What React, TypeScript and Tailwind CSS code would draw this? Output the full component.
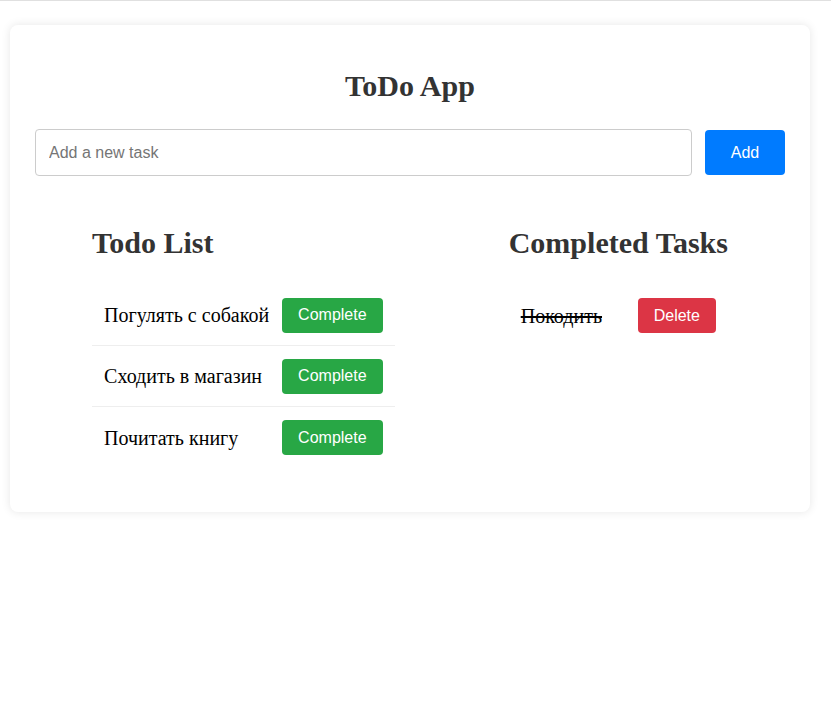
import React from "react";

const serif = { fontFamily: '"Liberation Serif", "Times New Roman", serif' };
const sans = { fontFamily: '"Liberation Sans", Arial, sans-serif' };

export default function App() {
  const todos = ["Погулять с собакой", "Сходить в магазин", "Почитать книгу"];
  const done = ["Покодить"];
  return (
    <div className="min-h-[706px] bg-white border-t border-[#e0e0e0]" style={serif}>
      <div className="ml-[10px] mt-[24px] w-[800px] rounded-[8px] bg-white px-[25px] pt-[44px] pb-[44px] shadow-[0_0_10px_rgba(0,0,0,0.1)]">
        <h1 className="text-center text-[30px] font-bold leading-[34px] text-[#333]">ToDo App</h1>
        <div className="mt-[26px] flex items-center gap-[13px]">
          <input
            className="h-[47px] flex-1 rounded-[4px] border border-[#ccc] px-[13px] text-[16px] text-black placeholder:text-[#757575] outline-none"
            style={sans}
            placeholder="Add a new task"
          />
          <button className="h-[45px] w-[80px] rounded-[4px] bg-[#007bff] text-[16px] text-white" style={sans}>
            Add
          </button>
        </div>
        <div className="mt-[50px] flex justify-around">
          <div>
            <h2 className="text-[30px] font-bold leading-[34px] text-[#333]">Todo List</h2>
            <ul className="mt-[25px]">
              {todos.map((t, i) => (
                <li
                  key={t}
                  className={`flex h-[61px] items-center justify-between gap-[13px] px-[12px] ${i < todos.length - 1 ? "border-b border-[#eee]" : ""}`}
                >
                  <span className="text-[20px] text-black">{t}</span>
                  <button className="h-[35px] rounded-[4px] bg-[#28a745] px-[16px] text-[16px] text-white" style={sans}>
                    Complete
                  </button>
                </li>
              ))}
            </ul>
          </div>
          <div>
            <h2 className="text-[30px] font-bold leading-[34px] text-[#333]">Completed Tasks</h2>
            <ul className="mt-[25px]">
              {done.map((t) => (
                <li key={t} className="flex h-[61px] items-center justify-between gap-[13px] px-[12px]">
                  <span className="text-[20px] text-black line-through">{t}</span>
                  <button className="h-[35px] rounded-[4px] bg-[#dc3545] px-[16px] text-[16px] text-white" style={sans}>
                    Delete
                  </button>
                </li>
              ))}
            </ul>
          </div>
        </div>
      </div>
    </div>
  );
}
